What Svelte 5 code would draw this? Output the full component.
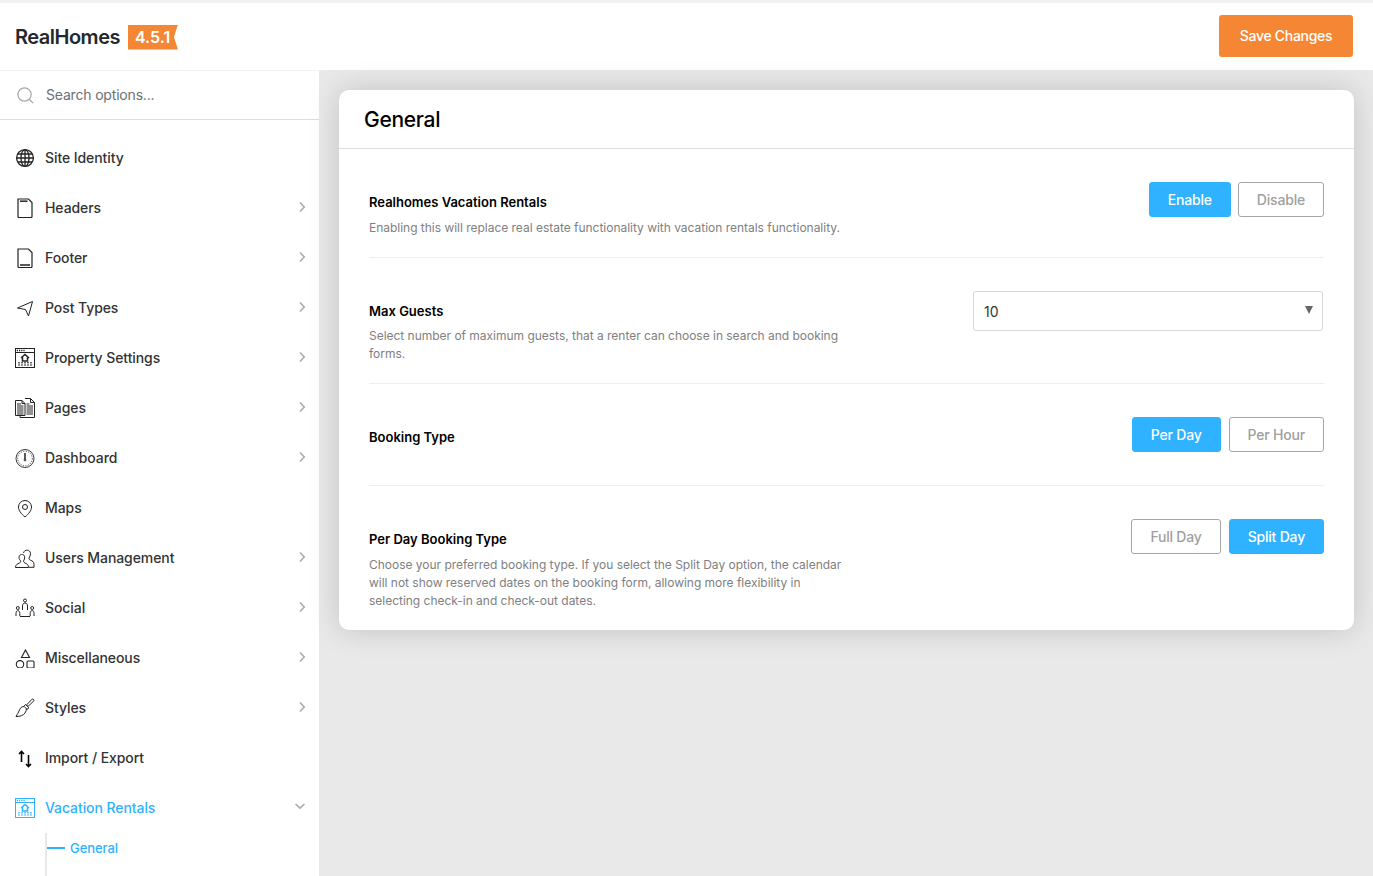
<script>
  const menu = [
    { id: 'globe', label: 'Site Identity' },
    { id: 'header', label: 'Headers', arrow: true },
    { id: 'footer', label: 'Footer', arrow: true },
    { id: 'plane', label: 'Post Types', arrow: true },
    { id: 'property', label: 'Property Settings', arrow: true },
    { id: 'pages', label: 'Pages', arrow: true },
    { id: 'gauge', label: 'Dashboard', arrow: true },
    { id: 'pin', label: 'Maps' },
    { id: 'users', label: 'Users Management', arrow: true },
    { id: 'social', label: 'Social', arrow: true },
    { id: 'shapes', label: 'Miscellaneous', arrow: true },
    { id: 'brush', label: 'Styles', arrow: true },
    { id: 'sort', label: 'Import / Export' }
  ];
</script>

{#snippet icon(id)}
  <svg class="icon" viewBox="0 0 20 20" fill="none" stroke="currentColor" stroke-width="1">
    {#if id === 'globe'}
      <g stroke-width="1.3">
        <circle cx="10" cy="10" r="8.4" />
        <ellipse cx="10" cy="10" rx="4" ry="8.4" />
        <path d="M10 1.600v16.800M1.600 10h16.800M2.800 6h14.400M2.800 14h14.400" />
      </g>
    {:else if id === 'header'}
      <path d="M3 1h10.500L17 4.500V18.500a1 1 0 0 1-1 1H4a1 1 0 0 1-1-1z" stroke-width="1.200" />
      <path d="M5 3.200h7.500" stroke-width="1.500" />
    {:else if id === 'footer'}
      <path d="M3 1h10.500L17 4.500V18.500a1 1 0 0 1-1 1H4a1 1 0 0 1-1-1z" stroke-width="1.200" />
      <path d="M5 17h10" stroke-width="1.500" />
    {:else if id === 'plane'}
      <path d="M2.500 10 17.500 3.500 13.500 18 10.500 11.500z" />
    {:else if id === 'property' || id === 'rentals'}
      <rect x="0.500" y="0.500" width="19" height="19" />
      <path d="M0.500 4.500h19" />
      <path d="M1.800 2.500h1.200M4 2.500h1.200M6.200 2.500h1.200M8.400 2.500h1.200" stroke-width="1.400" />
      <path d="M6 10 10 6.500l4 3.500M7.500 9.500V13h5V9.500" stroke-width="1.500" />
      <path d="M3 14.800h14M3 17h14" stroke-dasharray="2 1" />
    {:else if id === 'pages'}
      <path d="M0.500 2.500h6.500l3 3V17.500H0.500z" />
      <path d="M10 0.500h5.500l4 4V19.500H5V17.500" />
      <path d="M15.500 0.500v4h4M7 2.500v3h3" />
      <path d="M2 6h4M2 8h6.500M2 10h6.500M2 12h6.500M2 14h6.500M2 16h6.500M11.500 6h3M11.500 8h6.500M11.500 10h6.500M11.500 12h6.500M11.500 14h6.500M11.500 16h6.500" />
    {:else if id === 'gauge'}
      <circle cx="10" cy="10.500" r="9" stroke-width="0.900" />
      <circle cx="10" cy="10.500" r="7.300" stroke-dasharray="1 1.500" />
      <path d="M10 5V11" stroke-width="1.500" />
      <circle cx="10" cy="12" r="0.900" />
    {:else if id === 'pin'}
      <path d="M10 19C6 15.500 3.500 12.500 3.500 9a6.500 6.500 0 0 1 13 0c0 3.500-2.500 6.500-6.500 10z" />
      <circle cx="10" cy="9" r="2.500" />
    {:else if id === 'users'}
      <g transform="translate(0 1)">
        <path d="M0.500 18.500c0-3 2-3.500 4-4.500 1.500-.7 1.500-2 .5-3-1.500-1.500-1.500-5 1.500-5.500 3-.5 4 3 2.500 5.500-.8 1.300-.5 2.300 1 3 2 1 3.500 1.500 3.500 4.500z" />
        <path d="M8.500 4c.5-2 2-3 4-2.800 3.500.3 3.500 4.500 2 6.800-1 1.500-.5 2.500 1 3.200 2 .9 3.500 1.300 3.500 4.300v2.800h-5" />
      </g>
    {:else if id === 'social'}
      <circle cx="10" cy="2.500" r="1.500" />
      <path d="M7.500 12V8c0-2 1-3 2.500-3s2.500 1 2.500 3v4" />
      <circle cx="2.800" cy="10" r="1.500" />
      <circle cx="17.200" cy="10" r="1.500" />
      <path d="M1 18v-2.500c0-2 .8-2.800 1.800-2.800s2 .8 2 2.800V18M15.200 18v-2.500c0-2 .8-2.800 2-2.800s1.800.8 1.800 2.800V18" />
      <path d="M5 18.500h10" />
    {:else if id === 'shapes'}
      <path d="M10.500 2 14.500 9.500h-8z" stroke-width="1.100" />
      <circle cx="5" cy="16.300" r="3.700" stroke-width="1.100" />
      <rect x="12" y="13" width="7" height="7" rx="1.200" stroke-width="1.100" />
    {:else if id === 'brush'}
      <path d="M12 6.500 17 1.200c.8-.7 2.500.8 1.800 1.700L13.500 8z" />
      <path d="M10.500 6.500l3.500 3.300-2 1.500-3-3z" />
      <path d="M9 8.500c-3 0-4 2-5 4.500-.4 1.200-1.500 3-3 5.500 4 0 7.500-1 9-3.500 1-1.500 1.500-3 1.500-4.500" />
    {:else if id === 'sort'}
      <path d="M6.500 14V3.500M4 6l2.500-2.500L9 6M13.500 7v11.500M11 16l2.500 2.500L16 16" stroke-width="1.600" stroke="#000" />
    {/if}
  </svg>
{/snippet}

<div class="page">
  <header class="topbar">
    <div class="brand">
      <span class="name">RealHomes</span>
      <span class="version">4.5.1</span>
    </div>
    <button class="save">Save Changes</button>
  </header>

  <div class="body">
    <aside class="sidebar">
      <div class="search">
        <svg class="search-icon" viewBox="0 0 20 20" fill="none" stroke="#a6a6a6" stroke-width="1.300">
          <circle cx="9" cy="9" r="7" />
          <path d="M14.200 14.200 18 18" />
        </svg>
        <span>Search options...</span>
      </div>

      <nav class="menu">
        {#each menu as item}
          <div class="item">
            {@render icon(item.id)}
            <span class="label">{item.label}</span>
            {#if item.arrow}
              <svg class="chevron" viewBox="0 0 8 12" fill="none" stroke="#aaa" stroke-width="1.600">
                <path d="M2 1.500 6.200 6 2 10.500" />
              </svg>
            {/if}
          </div>
        {/each}

        <div class="item active">
          {@render icon('rentals')}
          <span class="label">Vacation Rentals</span>
          <svg class="chevron down" viewBox="0 0 12 8" fill="none" stroke="#aaa" stroke-width="1.600">
            <path d="M1.500 2 6 6.200 10.500 2" />
          </svg>
        </div>
        <div class="submenu">
          <a class="sub-item" href="#general">General</a>
        </div>
      </nav>
    </aside>

    <main class="content">
      <section class="card">
        <h1>General</h1>

        <div class="row">
          <div class="info">
            <h2>Realhomes Vacation Rentals</h2>
            <p>Enabling this will replace real estate functionality with vacation rentals functionality.</p>
          </div>
          <div class="controls tight">
            <button class="opt on">Enable</button>
            <button class="opt">Disable</button>
          </div>
        </div>

        <div class="row snug">
          <div class="info">
            <h2>Max Guests</h2>
            <p>Select number of maximum guests, that a renter can choose in search and booking forms.</p>
          </div>
          <div class="controls">
            <div class="select">
              <span>10</span>
              <span class="caret"></span>
            </div>
          </div>
        </div>

        <div class="row">
          <div class="info">
            <h2>Booking Type</h2>
          </div>
          <div class="controls">
            <button class="opt on">Per Day</button>
            <button class="opt">Per Hour</button>
          </div>
        </div>

        <div class="row last">
          <div class="info">
            <h2>Per Day Booking Type</h2>
            <p>Choose your preferred booking type. If you select the Split Day option, the calendar will not show reserved dates on the booking form, allowing more flexibility in selecting check-in and check-out dates.</p>
          </div>
          <div class="controls">
            <button class="opt">Full Day</button>
            <button class="opt on">Split Day</button>
          </div>
        </div>
      </section>
    </main>
  </div>
</div>

<style>
  :global(body) {
    margin: 0;
    font-family: Inter, "Liberation Sans", sans-serif;
    color: #333;
  }

  .page {
    height: 100vh;
    display: flex;
    flex-direction: column;
    overflow: hidden;
    background: #e9e9e9;
    border-top: 3px solid #f0f0f0;
    box-sizing: border-box;
  }

  .topbar {
    flex: none;
    height: 67px;
    display: flex;
    align-items: center;
    justify-content: space-between;
    padding: 0 20px 2px 15px;
    background: #fff;
    box-sizing: border-box;
  }

  .brand {
    display: flex;
    align-items: center;
    gap: 8px;
  }

  .name {
    margin-top: 2px;
    font-size: 20px;
    font-weight: 600;
    letter-spacing: -0.5px;
    color: #23282d;
  }

  .version {
    width: 50px;
    height: 25px;
    margin-top: 3px;
    padding-left: 7px;
    box-sizing: border-box;
    background: #f58634;
    color: #fff;
    font-size: 16px;
    font-weight: 600;
    line-height: 25px;
    clip-path: polygon(0 0, 100% 0, 92% 50%, 100% 100%, 0 100%);
  }

  .save {
    width: 134px;
    height: 42px;
    border: 0;
    border-radius: 3px;
    background: #f58634;
    color: #fff;
    font: 500 14px Inter, sans-serif;
    letter-spacing: -0.3px;
  }

  .body {
    flex: 1;
    min-height: 0;
    display: flex;
  }

  .sidebar {
    flex: none;
    width: 319px;
    background: #fff;
    border-top: 1px solid #f3f3f3;
    overflow: hidden;
  }

  .search {
    height: 48px;
    display: flex;
    align-items: center;
    gap: 11px;
    padding-left: 16px;
    border-bottom: 1px solid #ddd;
    font-size: 14px;
    letter-spacing: -0.18px;
    color: #6b6f76;
  }

  .search span {
    padding-bottom: 2px;
  }

  .search-icon {
    width: 19px;
    height: 19px;
  }

  .menu {
    padding-top: 13px;
  }

  .item {
    position: relative;
    height: 50px;
    display: flex;
    align-items: center;
    gap: 10px;
    padding: 0 13px 0 15px;
    font-size: 14px;
    font-weight: 500;
    letter-spacing: -0.08px;
    color: #333;
  }

  .icon {
    flex: none;
    width: 20px;
    height: 20px;
    color: #222;
  }

  .label {
    flex: 1;
    padding-bottom: 2px;
  }

  .chevron {
    flex: none;
    width: 8px;
    height: 12px;
    margin-top: -2px;
  }

  .chevron.down {
    width: 12px;
    height: 8px;
    margin: -4px 0 0;
  }

  .item.active,
  .item.active .icon {
    color: #2fb2ff;
  }

  .submenu {
    margin-left: 45px;
    border-left: 2px solid #e9e9e9;
    height: 60px;
  }

  .sub-item {
    display: flex;
    align-items: center;
    gap: 5px;
    height: 30px;
    font-size: 13px;
    font-weight: 500;
    letter-spacing: -0.05px;
    color: #2fb2ff;
    text-decoration: none;
  }

  .sub-item::before {
    content: '';
    width: 18px;
    height: 2px;
    background: #2fb2ff;
  }

  .content {
    flex: 1;
    min-width: 0;
    padding: 20px 19px 0 20px;
  }

  .card {
    background: #fff;
    border-radius: 10px;
    box-shadow: 0 0 30px rgba(0, 0, 0, 0.17);
  }

  h1 {
    margin: 0;
    height: 59px;
    padding-left: 25px;
    box-sizing: border-box;
    border-bottom: 1px solid #ddd;
    font-size: 21px;
    font-weight: 500;
    line-height: 60px;
    letter-spacing: -0.3px;
    color: #000;
  }

  .row {
    display: flex;
    justify-content: space-between;
    margin: 0 30px;
    padding-top: 33px;
    border-bottom: 1px solid #eee;
  }

  .row.last {
    border-bottom: 0;
  }

  .info {
    width: 480px;
    padding: 11px 0 20px;
  }

  h2 {
    margin: 0;
    font-size: 13px;
    font-weight: 600;
    line-height: 18px;
    color: #000;
  }

  p {
    margin: 8px 0 0;
    font-size: 12px;
    line-height: 18px;
    letter-spacing: -0.02px;
    color: #808080;
  }

  .snug p {
    margin-top: 7px;
  }

  .controls {
    display: flex;
    gap: 8px;
    padding-bottom: 33px;
    align-items: flex-start;
  }

  .controls.tight {
    gap: 7px;
  }

  .opt {
    height: 35px;
    padding: 0 18px;
    border: 1px solid #a6a6a6;
    border-radius: 3px;
    background: #fff;
    color: #a0a0a0;
    font: 500 14px Inter, sans-serif;
    letter-spacing: -0.2px;
  }

  .opt.on {
    border-color: #2fb2ff;
    background: #2fb2ff;
    color: #fff;
  }

  .select {
    width: 350px;
    height: 40px;
    display: flex;
    align-items: center;
    justify-content: space-between;
    padding: 0 9px 0 10px;
    box-sizing: border-box;
    border: 1px solid #d8d8d8;
    border-radius: 3px;
    margin-right: 1px;
    font-size: 14px;
    color: #333;
  }

  .caret {
    width: 0;
    height: 0;
    margin-top: -2px;
    border-left: 4px solid transparent;
    border-right: 4px solid transparent;
    border-top: 8px solid #666;
  }
</style>
